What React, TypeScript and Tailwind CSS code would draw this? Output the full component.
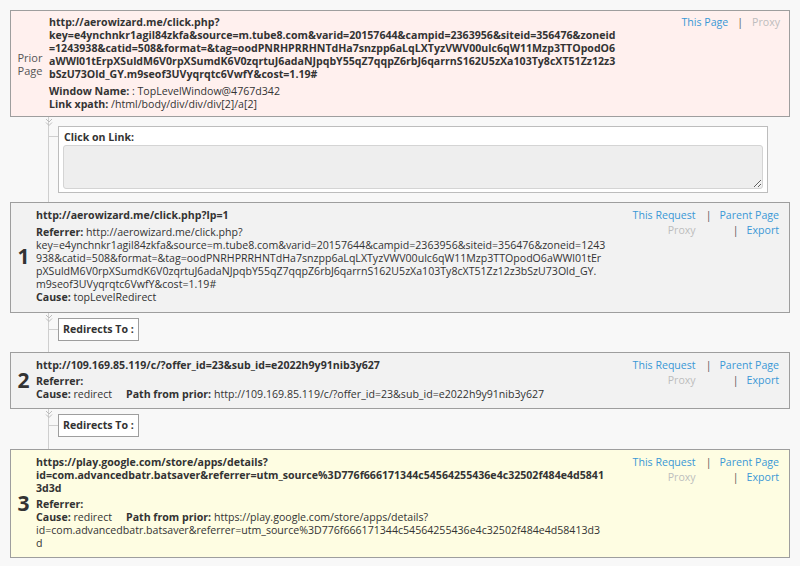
import React from "react";

const font = { fontFamily: '"Open Sans", "Liberation Sans", sans-serif' };

function Chevron() {
  return (
    <svg className="absolute left-[-4px] top-[1px]" width="8" height="9" viewBox="0 0 8 9" fill="none" stroke="#bdbdbd" strokeWidth="1">
      <path d="M1 1 L4 4 L7 1" />
      <path d="M1 4.5 L4 7.5 L7 4.5" />
    </svg>
  );
}

function Links({ single }: { single?: boolean }) {
  if (single) {
    return (
      <div className="flex justify-end gap-[9px] text-[10.6px] leading-[13px]">
        <span className="text-[#3a98d6]">This Page</span>
        <span className="text-[#555]">|</span>
        <span className="text-[#bdbdbd]">Proxy</span>
      </div>
    );
  }
  return (
    <div className="flex justify-end">
      <div className="grid grid-cols-[auto_auto] gap-x-[10px] gap-y-[2px] text-[10.6px] leading-[13px] text-right">
        <span className="text-[#3a98d6]">This Request</span>
        <span className="flex justify-end gap-[8px]">
          <span className="text-[#555]">|</span>
          <span className="text-[#3a98d6]">Parent Page</span>
        </span>
        <span className="text-[#bdbdbd]">Proxy</span>
        <span className="flex justify-end gap-[8px]">
          <span className="text-[#555]">|</span>
          <span className="text-[#3a98d6]">Export</span>
        </span>
      </div>
    </div>
  );
}

function Panel({
  num,
  bg,
  pb,
  children,
}: {
  num: string;
  bg: string;
  pb: string;
  children: React.ReactNode;
}) {
  return (
    <div className={`flex border border-[#9e9e9e] ${bg} pt-[6px] ${pb}`}>
      <div className="w-[25px] shrink-0 flex items-center justify-center text-[21px] font-bold text-[#333] leading-none">
        {num}
      </div>
      <div className="w-[570px] shrink-0 text-[10.6px] leading-[13px] text-[#333] break-words">
        {children}
      </div>
      <div className="flex-1 pr-[10px]">
        <Links />
      </div>
    </div>
  );
}

function Redirect({ pb }: { pb: string }) {
  return (
    <div className={`relative ml-[38px] border-l border-[#cfcfcf] pt-[5px] ${pb}`}>
      <Chevron />
      <div className="flex items-center">
        <div className="w-[9px] h-px bg-[#cfcfcf]" />
        <div className="border border-[#9e9e9e] bg-white px-[4px] py-[4px] text-[10.6px] leading-[13px] font-bold text-[#333]">
          Redirects To :
        </div>
      </div>
    </div>
  );
}

export default function App() {
  return (
    <div className="min-h-[566px] bg-[#f8f8f8] px-[10px] pt-[10px] pb-[10px]" style={font}>
      {/* Prior page */}
      <div className="flex border border-[#9e9e9e] bg-[#fff0ee] pt-[5px] pb-[5px]">
        <div className="w-[38px] shrink-0 flex items-center justify-center text-[11px] leading-[13px] text-[#555] text-center">
          Prior
          <br />
          Page
        </div>
        <div className="w-[570px] shrink-0 text-[10.6px] leading-[13px] text-[#333] break-words">
          <div className="font-bold">
            http://aerowizard.me/click.php?key=e4ynchnkr1agil84zkfa&amp;source=m.tube8.com&amp;varid=20157644&amp;campid=2363956&amp;siteid=356476&amp;zoneid=1243938&amp;catid=508&amp;format=&amp;tag=oodPNRHPRRHNTdHa7snzpp6aLqLXTyzVWV00ulc6qW11Mzp3TTOpodO6aWWl01tErpXSuldM6V0rpXSumdK6V0zqrtuJ6adaNJpqbY55qZ7qqpZ6rbJ6qarrnS162U5zXa103Ty8cXT51Zz12z3bSzU73Old_GY.m9seof3UVyqrqtc6VwfY&amp;cost=1.19#
          </div>
          <div className="mt-[4px]">
            <span className="font-bold">Window Name:</span> : TopLevelWindow@4767d342
          </div>
          <div>
            <span className="font-bold">Link xpath:</span> /html/body/div/div/div[2]/a[2]
          </div>
        </div>
        <div className="flex-1 pr-[9px]">
          <Links single />
        </div>
      </div>

      {/* Click on link */}
      <div className="relative ml-[38px] border-l border-[#cfcfcf] pt-[9px] pb-[9px]">
        <Chevron />
        <div className="flex">
          <div className="w-[9px] h-px bg-[#cfcfcf] mt-[10px]" />
          <div className="w-[710px] border border-[#bdbdbd] bg-white px-[4px] pt-[3px] pb-[3px]">
            <div className="text-[10.6px] leading-[14px] font-bold text-[#333] px-[1px]">Click on Link:</div>
            <textarea
              readOnly
              className="block w-full h-[44px] mt-[1px] bg-[#eeeeee] border border-[#d4d4d4] rounded-[3px] outline-none"
            />
          </div>
        </div>
      </div>

      <Panel num="1" bg="bg-[#f2f2f2]" pb="pb-[8px]">
        <div className="font-bold">http://aerowizard.me/click.php?lp=1</div>
        <div className="mt-[4px]">
          <span className="font-bold">Referrer:</span> http://aerowizard.me/click.php?key=e4ynchnkr1agil84zkfa&amp;source=m.tube8.com&amp;varid=20157644&amp;campid=2363956&amp;siteid=356476&amp;zoneid=1243938&amp;catid=508&amp;format=&amp;tag=oodPNRHPRRHNTdHa7snzpp6aLqLXTyzVWV00ulc6qW11Mzp3TTOpodO6aWWl01tErpXSuldM6V0rpXSumdK6V0zqrtuJ6adaNJpqbY55qZ7qqpZ6rbJ6qarrnS162U5zXa103Ty8cXT51Zz12z3bSzU73Old_GY.m9seof3UVyqrqtc6VwfY&amp;cost=1.19#
        </div>
        <div>
          <span className="font-bold">Cause:</span> topLevelRedirect
        </div>
      </Panel>

      <Redirect pb="pb-[11px]" />

      <Panel num="2" bg="bg-[#f2f2f2]" pb="pb-[7px]">
        <div className="font-bold">http://109.169.85.119/c/?offer_id=23&amp;sub_id=e2022h9y91nib3y627</div>
        <div className="mt-[3px] font-bold">Referrer:</div>
        <div>
          <span className="font-bold">Cause:</span> redirect<span className="inline-block w-[14px]" />
          <span className="font-bold">Path from prior:</span> http://109.169.85.119/c/?offer_id=23&amp;sub_id=e2022h9y91nib3y627
        </div>
      </Panel>

      <Redirect pb="pb-[12px]" />

      <Panel num="3" bg="bg-[#fefde2]" pb="pb-[7px]">
        <div className="font-bold">
          https://play.google.com/store/apps/details?id=com.advancedbatr.batsaver&amp;referrer=utm_source%3D776f666171344c54564255436e4c32502f484e4d58413d3d
        </div>
        <div className="mt-[3px] font-bold">Referrer:</div>
        <div>
          <span className="font-bold">Cause:</span> redirect<span className="inline-block w-[14px]" />
          <span className="font-bold">Path from prior:</span> https://play.google.com/store/apps/details?id=com.advancedbatr.batsaver&amp;referrer=utm_source%3D776f666171344c54564255436e4c32502f484e4d58413d3d
        </div>
      </Panel>
    </div>
  );
}
